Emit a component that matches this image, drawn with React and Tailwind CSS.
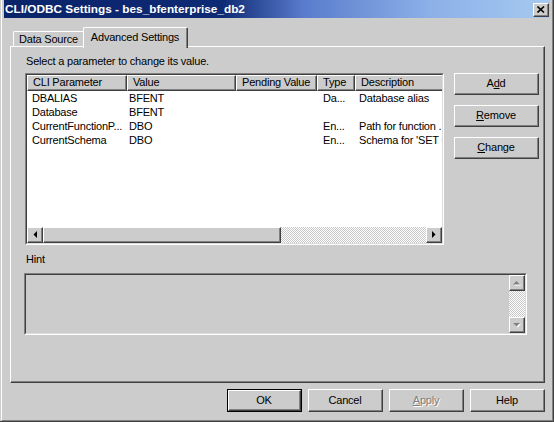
import React from "react";

const DITHER =
  "bg-[repeating-conic-gradient(#ffffff_0%_25%,#c8c8c8_0%_50%)] bg-[length:2px_2px]";

function Raised({ className = "", inner = "", children }) {
  return (
    <div
      className={`border-t border-l border-r border-b border-t-white border-l-white border-r-[#404040] border-b-[#404040] ${className}`}
    >
      <div
        className={`w-full h-full border-r border-b border-r-[#808080] border-b-[#808080] ${inner}`}
      >
        {children}
      </div>
    </div>
  );
}

function Sunken({ className = "", inner = "", children }) {
  return (
    <div
      className={`border-t border-l border-r border-b border-t-[#808080] border-l-[#808080] border-r-white border-b-white ${className}`}
    >
      <div
        className={`w-full h-full border-t border-l border-r border-b border-t-[#404040] border-l-[#404040] border-r-[#dcdcdc] border-b-[#dcdcdc] ${inner}`}
      >
        {children}
      </div>
    </div>
  );
}

function Arrow({ dir, disabled }) {
  const pts = {
    left: "5,0 5,7 1.5,3.5",
    right: "1,0 1,7 4.5,3.5",
    up: "0,4.5 7,4.5 3.5,1",
    down: "0,1 7,1 3.5,4.5",
  }[dir];
  const w = dir === "left" || dir === "right" ? 6 : 8;
  const h = dir === "left" || dir === "right" ? 8 : 6;
  return (
    <svg width={w} height={h} viewBox={`0 0 ${w} ${h}`}>
      {disabled && (
        <polygon points={pts} fill="#ffffff" transform="translate(1,1)" />
      )}
      <polygon points={pts} fill={disabled ? "#808080" : "#000000"} />
    </svg>
  );
}

function Btn({ children, className = "", isDefault }) {
  const body = (
    <Raised
      className="w-full h-full bg-[#cccccc]"
      inner="flex items-center justify-center"
    >
      {children}
    </Raised>
  );
  if (isDefault) {
    return (
      <div className={`border border-black ${className}`}>{body}</div>
    );
  }
  return <div className={className}>{body}</div>;
}

const rows = [
  ["DBALIAS", "BFENT", "", "Da...", "Database alias"],
  ["Database", "BFENT", "", "", ""],
  ["CurrentFunctionP...", "DBO", "", "En...", "Path for function ..."],
  ["CurrentSchema", "DBO", "", "En...", "Schema for 'SET CURRENT'"],
];

const cols = [
  { name: "CLI Parameter", w: "w-[100px]", pad: "pl-[5px]" },
  { name: "Value", w: "w-[109px]", pad: "pl-[2px]" },
  { name: "Pending Value", w: "w-[81px]", pad: "pl-[4px]" },
  { name: "Type", w: "w-[38px]", pad: "pl-[6px]" },
  { name: "Description", w: "w-[130px]", pad: "pl-[4px]" },
];

export default function App() {
  return (
    <div className="w-[554px] h-[422px] overflow-hidden bg-[#cccccc] font-['Liberation_Sans',Arial,sans-serif] text-[11px] tracking-[-0.2px] text-black leading-[13px] select-none">
      <div className="w-full h-full pl-[1px] border-r border-b border-r-[#404040] border-b-[#404040]">
        <div className="w-full h-full flex flex-col border-l border-l-white border-r border-b border-r-[#808080] border-b-[#808080] px-[2px]">
          {/* Title bar */}
          <div className="h-[18px] shrink-0 flex items-start bg-[linear-gradient(to_right,#0a246a_0%,#0e2a74_40%,#5a7ccc_55%,#8cb0e8_78%,#a6caf0_100%)] pl-[1px] pr-[1px]">
            <span className="text-white font-bold text-[11.8px] tracking-normal leading-[18px] whitespace-nowrap">
              CLI/ODBC Settings - bes_bfenterprise_db2
            </span>
            <div className="ml-auto mt-[3px] w-[16px] h-[14px]">
              <Raised
                className="w-full h-full bg-[#cccccc]"
                inner="flex items-center justify-center"
              >
                <svg width="8" height="7" viewBox="0 0 8 7">
                  <path
                    d="M0.5 0.5 L7 6.5 M7 0.5 L0.5 6.5"
                    stroke="#000"
                    strokeWidth="1.6"
                    fill="none"
                  />
                </svg>
              </Raised>
            </div>
          </div>

          {/* Tabs */}
          <div className="mt-[9px] h-[19px] shrink-0 flex items-end pl-[9px] relative z-10">
            <div className="h-[15px] w-[70px] border-t border-l border-t-white border-l-white rounded-tl-[2px] flex items-center justify-center whitespace-nowrap">
              Data Source
            </div>
            <div className="h-[21px] -mb-[2px] w-[105px] bg-[#cccccc] border-t border-l border-t-white border-l-white border-r border-r-[#404040] rounded-tl-[2px] rounded-tr-[2px]">
              <div className="h-full border-r border-r-[#808080] flex justify-center pt-[3px] whitespace-nowrap">
                Advanced Settings
              </div>
            </div>
          </div>

          {/* Panel */}
          <div className="ml-[6px] mr-[5px] h-[337px] shrink-0 border-t border-l border-t-white border-l-white border-r border-b border-r-[#404040] border-b-[#404040]">
            <div className="w-full h-full border-r border-b border-r-[#808080] border-b-[#808080] pl-[14px] pt-[8px] flex flex-col">
              <div className="ml-[1px] whitespace-nowrap">
                Select a parameter to change its value.
              </div>
              <div className="mt-[5px] flex">
                {/* List view */}
                <Sunken
                  className="w-[419px] h-[172px] shrink-0"
                  inner="bg-white flex flex-col overflow-hidden"
                >
                  <div className="h-[16px] shrink-0 flex">
                    {cols.map((c) => (
                      <Raised
                        key={c.name}
                        className={`${c.w} shrink-0 h-full bg-[#cccccc]`}
                        inner={`flex items-center pl-[5px] whitespace-nowrap overflow-hidden`}
                      >
                        {c.name}
                      </Raised>
                    ))}
                  </div>
                  <div className="flex-1 flex flex-col">
                    {rows.map((r, i) => (
                      <div key={i} className="h-[14px] flex">
                        {r.map((cell, j) => (
                          <div
                            key={j}
                            className={`${cols[j].w} ${cols[j].pad} shrink-0 whitespace-nowrap overflow-hidden leading-[14px]`}
                          >
                            {cell}
                          </div>
                        ))}
                      </div>
                    ))}
                  </div>
                  <div className="h-[16px] shrink-0 flex bg-[#cccccc]">
                    <Raised
                      className="w-[16px] h-full bg-[#cccccc]"
                      inner="flex items-center justify-center"
                    >
                      <Arrow dir="left" />
                    </Raised>
                    <Raised className="w-[238px] h-full bg-[#cccccc]" />
                    <div className={`flex-1 ${DITHER}`} />
                    <Raised
                      className="w-[16px] h-full bg-[#cccccc]"
                      inner="flex items-center justify-center"
                    >
                      <Arrow dir="right" />
                    </Raised>
                  </div>
                </Sunken>

                {/* Side buttons */}
                <div className="ml-[10px] w-[85px] flex flex-col gap-[10px]">
                  <Btn className="h-[22px]">
                    A<u className="underline-offset-[1px]">d</u>d
                  </Btn>
                  <Btn className="h-[22px]">
                    <u className="underline-offset-[1px]">R</u>emove
                  </Btn>
                  <Btn className="h-[22px]">
                    <u className="underline-offset-[1px]">C</u>hange
                  </Btn>
                </div>
              </div>

              <div className="ml-[1px] mt-[8px]">Hint</div>
              <Sunken
                className="ml-[-1px] mt-[7px] w-[503px] h-[62px]"
                inner="flex justify-end"
              >
                <div className="w-[16px] h-full flex flex-col">
                  <Raised
                    className="w-full h-[16px] bg-[#cccccc]"
                    inner="flex items-center justify-center"
                  >
                    <Arrow dir="up" disabled />
                  </Raised>
                  <div className={`flex-1 ${DITHER}`} />
                  <Raised
                    className="w-full h-[16px] bg-[#cccccc]"
                    inner="flex items-center justify-center"
                  >
                    <Arrow dir="down" disabled />
                  </Raised>
                </div>
              </Sunken>
            </div>
          </div>

          {/* Bottom buttons */}
          <div className="mt-[6px] h-[23px] shrink-0 flex justify-end gap-[6px] pr-[5px]">
            <Btn className="w-[75px] h-full" isDefault>
              OK
            </Btn>
            <Btn className="w-[75px] h-full">Cancel</Btn>
            <Btn className="w-[75px] h-full">
              <span className="text-[#808080] [text-shadow:1px_1px_0_#ffffff]">
                <u className="underline-offset-[1px]">A</u>pply
              </span>
            </Btn>
            <Btn className="w-[75px] h-full">Help</Btn>
          </div>
        </div>
      </div>
    </div>
  );
}
